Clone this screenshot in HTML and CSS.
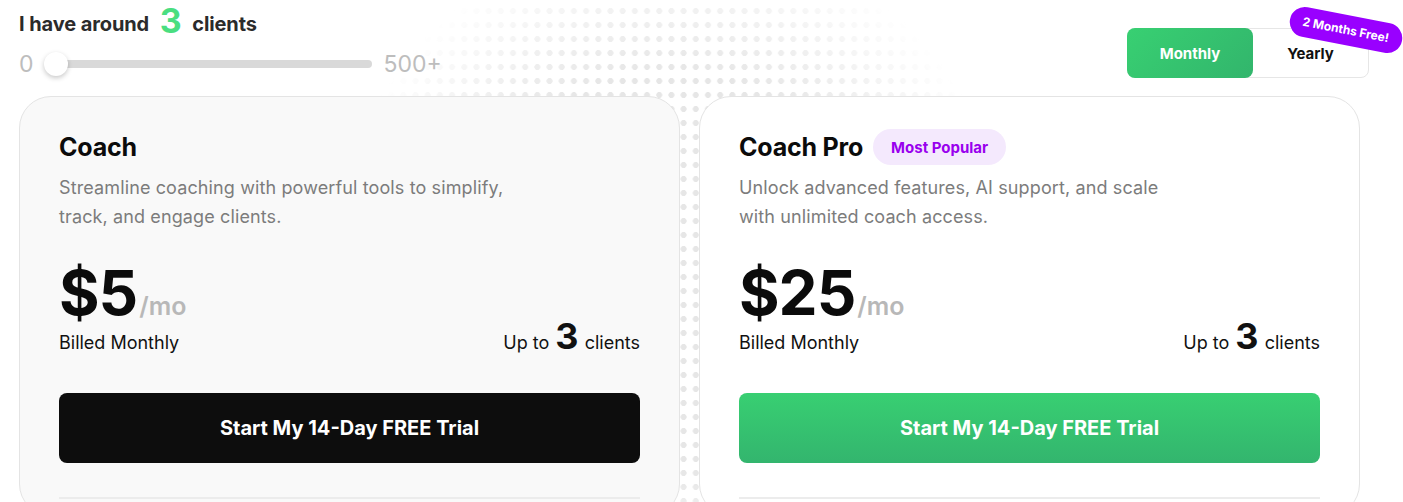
FILE: index.html
```html
<!DOCTYPE html>
<html lang="en">
<head>
<meta charset="utf-8">
<title>Pricing</title>
<link rel="stylesheet" href="styles.css">
</head>
<body>
<div class="page">
  <div class="dots" aria-hidden="true"></div>
  <header class="top">
    <div class="clients">
      <h2 class="clients-title">I have around <span class="count">3</span> clients</h2>
      <div class="slider">
        <span class="slider-label">0</span>
        <div class="track"><span class="thumb"></span></div>
        <span class="slider-label">500+</span>
      </div>
    </div>
    <div class="toggle">
      <button class="toggle-btn active">Monthly</button>
      <button class="toggle-btn">Yearly</button>
      <span class="promo">2 Months Free!</span>
    </div>
  </header>
  <main class="cards">
    <section class="card card-basic">
      <div class="card-head"><h3 class="card-title">Coach</h3></div>
      <p class="card-desc">Streamline coaching with powerful tools to simplify,<br>track, and engage clients.</p>
      <div class="price"><span class="amount">$5</span><span class="per">/mo</span></div>
      <div class="meta">
        <span class="billed">Billed Monthly</span>
        <span class="limit">Up to <b class="limit-num">3</b> clients</span>
      </div>
      <button class="cta cta-dark">Start My 14-Day FREE Trial</button>
      <hr class="divider">
    </section>
    <section class="card card-pro">
      <div class="card-head"><h3 class="card-title">Coach Pro</h3><span class="badge">Most Popular</span></div>
      <p class="card-desc">Unlock advanced features, AI support, and scale<br>with unlimited coach access.</p>
      <div class="price"><span class="amount">$25</span><span class="per">/mo</span></div>
      <div class="meta">
        <span class="billed">Billed Monthly</span>
        <span class="limit">Up to <b class="limit-num">3</b> clients</span>
      </div>
      <button class="cta cta-green">Start My 14-Day FREE Trial</button>
      <hr class="divider">
    </section>
  </main>
</div>
</body>
</html>
```

FILE: styles.css
```css
* { box-sizing: border-box; }
html, body { margin: 0; padding: 0; background: #fff; }
body {
  font-family: Inter, "Noto Sans", "Liberation Sans", sans-serif;
  color: #111;
  overflow: hidden;
}
.page {
  position: relative;
  width: 1403px;
  height: 502px;
  padding: 0 0 0 19px;
}
.dots {
  position: absolute;
  inset: 0;
  z-index: 0;
  background-image: radial-gradient(circle, #e6e6e6 0, #e6e6e6 2.7px, transparent 3.3px);
  background-size: 12.2px 14px;
  background-position: 7.2px 4px;
  -webkit-mask-image: radial-gradient(circle 340px at 672px 270px, #000 58%, transparent 100%);
  mask-image: radial-gradient(circle 340px at 672px 270px, #000 58%, transparent 100%);
}
.top {
  position: relative;
  z-index: 1;
  display: flex;
  justify-content: space-between;
  align-items: flex-start;
  width: 1350px;
  height: 96px;
}
.clients-title {
  margin: 0;
  padding-top: 3px;
  font-size: 20px;
  font-weight: 700;
  color: #2b2b2b;
  line-height: 36px;
  letter-spacing: -0.1px;
}
.count {
  font-size: 34px;
  color: #4ade80;
  margin: 0 6px;
  vertical-align: -2px;
}
.slider {
  display: flex;
  align-items: center;
  gap: 12px;
  margin-top: 10px;
}
.slider-label {
  font-size: 23px;
  color: #bdbdbd;
  font-weight: 400;
  line-height: 24px;
}
.track {
  position: relative;
  width: 326px;
  height: 8px;
  border-radius: 4px;
  background: #d9d9d9;
}
.thumb {
  position: absolute;
  left: -2px;
  top: -8px;
  width: 24px;
  height: 24px;
  border-radius: 50%;
  background: #fff;
  box-shadow: 0 2px 5px rgba(0,0,0,0.22);
}
.toggle {
  position: relative;
  display: flex;
  margin-top: 28px;
  width: 242px;
  height: 50px;
  border: 1px solid #e6e6e6;
  border-radius: 8px;
  background: #fff;
}
.toggle-btn {
  flex: 1;
  border: 0;
  background: transparent;
  font-family: inherit;
  font-size: 15px;
  font-weight: 700;
  color: #111;
  border-radius: 8px;
  cursor: pointer;
}
.toggle-btn.active {
  flex: 0 0 126px;
  margin: -1px 0 -1px -1px;
  color: #fff;
  background: linear-gradient(135deg, #38d072 0%, #32b56c 100%);
}
.promo {
  position: absolute;
  right: -35px;
  top: -14px;
  padding: 8px 13px;
  border-radius: 16px;
  background: #9900ff;
  color: #fff;
  font-size: 12px;
  font-weight: 700;
  white-space: nowrap;
  transform: rotate(11deg);
  line-height: 14px;
}
.cards {
  position: relative;
  z-index: 1;
  display: grid;
  grid-template-columns: 661px 661px;
  gap: 19px;
}
.card {
  height: 420px;
  border: 1px solid #e4e4e4;
  border-radius: 32px;
  padding: 32px 39px 0;
  overflow: hidden;
}
.card-basic { background: #f9f9f9; }
.card-pro { background: #fff; }
.card-head {
  display: flex;
  align-items: center;
  gap: 10px;
  height: 36px;
}
.card-title {
  margin: 0;
  font-size: 25px;
  font-weight: 700;
  color: #0b0b0b;
  letter-spacing: -0.2px;
}
.badge {
  display: inline-flex;
  align-items: center;
  height: 36px;
  padding: 0 18px;
  border-radius: 18px;
  background: #f4e9fd;
  color: #9900ee;
  font-size: 15px;
  font-weight: 700;
}
.card-desc {
  margin: 8px 0 0;
  font-size: 18px;
  line-height: 29px;
  color: #7c7c7c;
  letter-spacing: 0.12px;
}
.price {
  margin-top: 32px;
  display: flex;
  align-items: baseline;
  line-height: 60px;
  height: 56px;
}
.amount {
  font-size: 62px;
  font-weight: 700;
  color: #0b0b0b;
  letter-spacing: -1px;
}
.per {
  font-size: 25px;
  font-weight: 600;
  color: #b8b8b8;
  margin-left: 2px;
}
.meta {
  display: flex;
  justify-content: space-between;
  align-items: baseline;
  line-height: 36px;
  height: 36px;
  font-size: 18px;
  color: #111;
  margin-top: -1px;
}
.limit-num {
  font-size: 36px;
  font-weight: 700;
  margin: 0 1px;
}
.cta {
  display: block;
  width: 100%;
  height: 70px;
  margin-top: 39px;
  border: 0;
  border-radius: 8px;
  font-family: inherit;
  font-size: 20px;
  font-weight: 700;
  color: #fff;
  cursor: pointer;
}
.cta-dark { background: #0d0d0d; }
.cta-green { background: linear-gradient(180deg, #38cf72 0%, #33b56e 100%); }
.divider {
  margin: 34px 0 0;
  border: 0;
  height: 2px;
  background: #ececec;
}
```
